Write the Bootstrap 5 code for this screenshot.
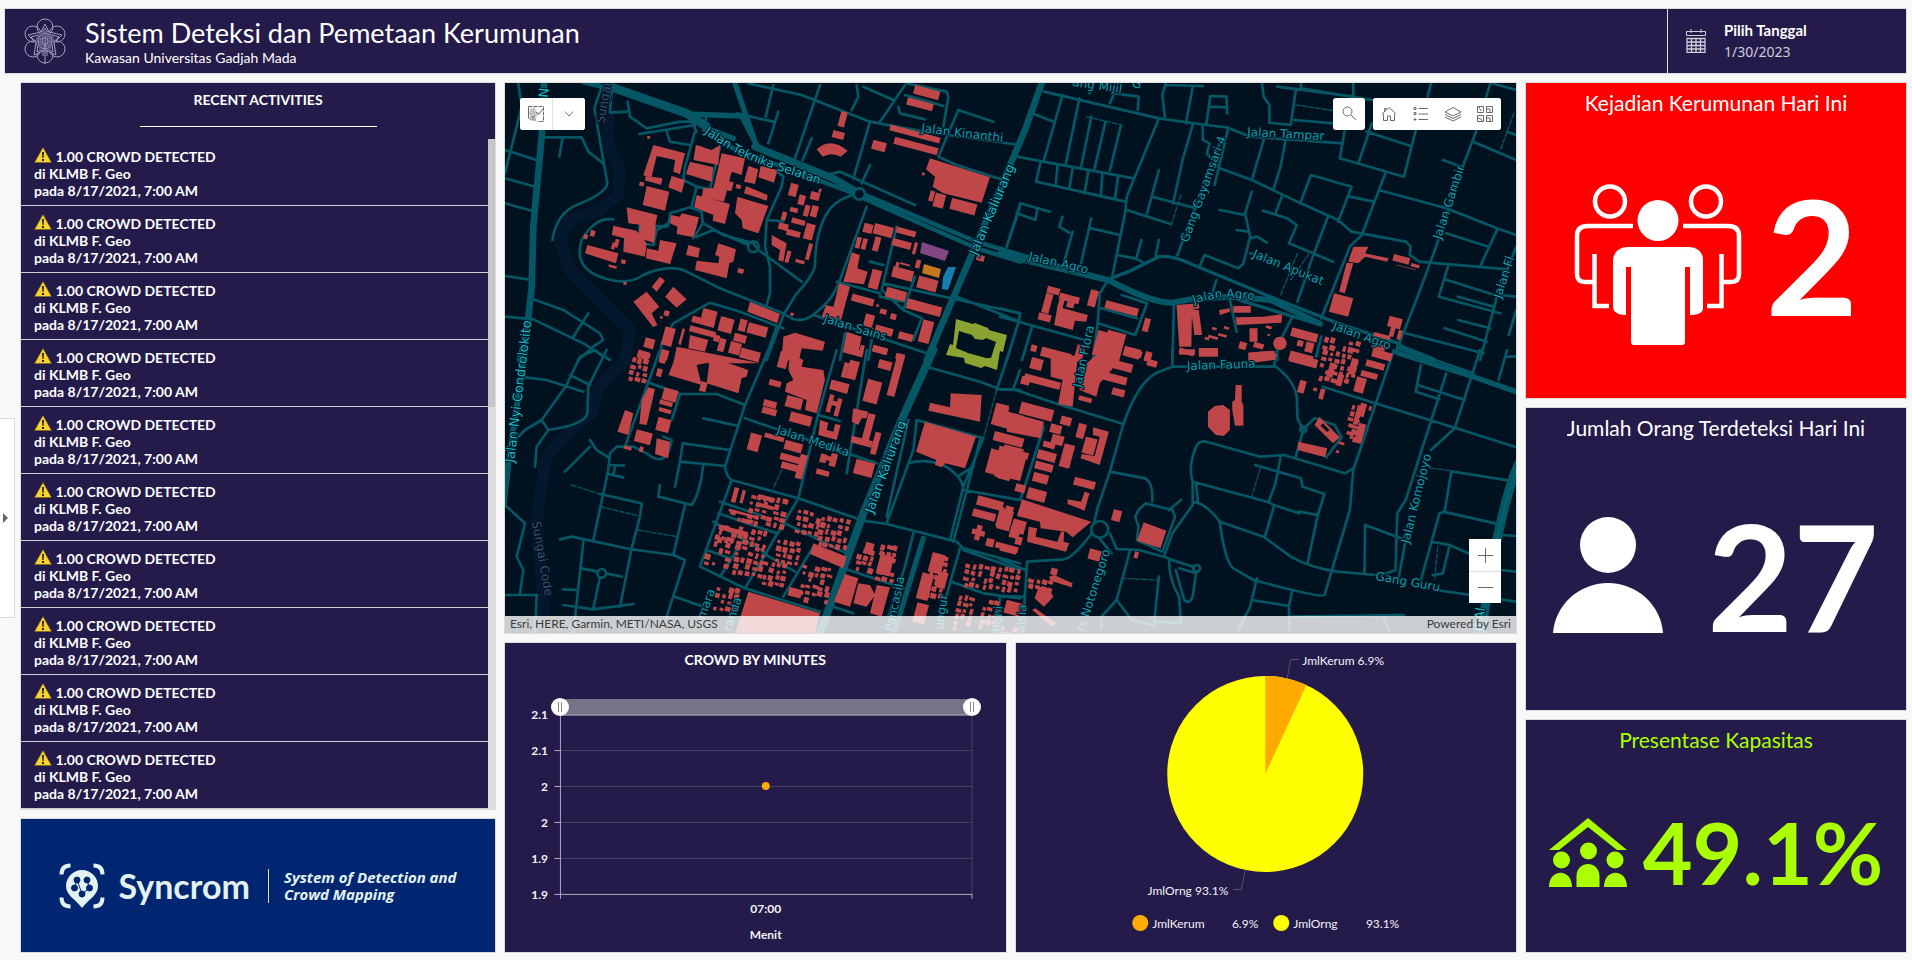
<!DOCTYPE html>
<html lang="id">
<head>
<meta charset="utf-8">
<meta name="viewport" content="width=device-width, initial-scale=1">
<title>Sistem Deteksi dan Pemetaan Kerumunan</title>
<link href="https://cdn.jsdelivr.net/npm/bootstrap@5.3.0/dist/css/bootstrap.min.css" rel="stylesheet">
<style>
  body { background: #f8f8f8; color: #fff; font-family: Lato, "Open Sans", sans-serif; font-size: 14px; line-height: 17px; }
  .page { padding: 8px 5px 7px 0; gap: 8px; min-height: 100vh; }
  .panel { background: #241b4a; border: 1px solid #dcdcdc; min-width: 0; min-height: 0; }
  .topbar { min-height: 66px; margin-left: 4px; }
  .topbar h1 { font-size: 27px; line-height: 32px; font-weight: 400; }
  .date-box { width: 239px; border-left: 1px solid #dcdcdc; background: none; color: #fff; padding: 0 18px; gap: 18px; }
  .date-label { font-size: 15px; font-weight: 700; }
  .date-value { font-family: "Noto Sans", sans-serif; color: #cfcdda; }
  .drawer-tab { width: 15px; height: 200px; background: #fff; border: 1px solid #dcdcdc; border-left: 0; padding: 0; margin-right: 5px; }
  .board { display: grid; grid-template-columns: 476fr 1013fr 382fr; gap: 8px; min-width: 0; }
  .column { display: grid; gap: 8px; min-width: 0; min-height: 0; }
  .column-left { grid-template-rows: 728fr 135fr; }
  .column-mid { grid-template-rows: 552fr 311fr; }
  .column-right { grid-template-rows: 317fr 304fr 234fr; }
  .charts { display: grid; grid-template-columns: 1fr 1fr; gap: 8px; min-height: 0; }
  .panel-title { font-size: 14px; line-height: 17px; font-weight: 700; text-align: center; }
  .title-rule { width: 50%; height: 1px; background: #fff; margin: 2px 0 4px; }
  .activity { padding: 9px 13px 6px; border-bottom: 1px solid #cfcfcf; font-weight: 700; line-height: 17px; }
  .activity svg { margin-top: -6px; }
  .scroll-track { width: 7px; background: #dedede; }
  .scroll-thumb { height: 40%; background: #c6c6c6; }
  .brand-panel { background: #002672; color: #e2f2f0; }
  .brand-name { font-size: 34px; line-height: 40px; font-weight: 700; margin: 0 18px 0 13px; }
  .brand-tag { font: italic 700 15px/17px "Open Sans", sans-serif; border-left: 1px solid #cfe0e6; padding-left: 15px; }
  .map { background: #00111f; overflow: hidden; }
  .map-canvas { position: absolute; inset: 0; width: 100%; height: 100%; }
  .map text { font-family: "DejaVu Sans", sans-serif; font-size: 12px; fill: #0a9fad; stroke: #00111f; stroke-width: 2px; paint-order: stroke; }
  .map .street-major { fill: #10bcc8; font-size: 13px; }
  .map .street-curved { fill: #10bcc8; }
  .map .river-name { fill: #36506f; }
  .map-tools { top: 15px; left: 15px; right: 15px; }
  .tool-set { background: #fff; border-radius: 3px; overflow: hidden; }
  .tool { width: 32px; height: 32px; border: 0; padding: 0; background: #fff; display: grid; place-items: center; }
  .tool.border-start { width: 33px; }
  .zoom-set { right: 15px; bottom: 30px; }
  .zoom-set .tool + .tool { border-top: 1px solid #ddd; }
  .credits { background: rgba(255,255,255,.8); color: #3c3c3c; height: 17px; font-size: 12px; line-height: 16px; padding: 0 5px; }
  .chart text { font-family: Lato, sans-serif; font-size: 12px; font-weight: 700; fill: #f2f1f6; }
  .chart .pie-text { font-weight: 400; }
  .range-pair { position: absolute; left: 46px; right: 25px; top: 55px; height: 18px; }
  .range-pair input { position: absolute; inset: 0; width: 100%; height: 18px; margin: 0; appearance: none; background: none; pointer-events: none; }
  .range-pair input::-webkit-slider-thumb { appearance: none; pointer-events: auto; width: 18px; height: 18px; border-radius: 50%; border: 0;
    background: linear-gradient(90deg, #888 1px, transparent 1px 3px, #888 3px 4px) center / 4px 10px no-repeat #fff; }
  .figure-title { font-size: 21px; line-height: 24px; padding-top: 8px; font-weight: 400; margin: 0; }
  .figure { font-weight: 700; line-height: 1; }
  .figure-xl { font-size: 160px; margin-bottom: 6px; } .figure-lg { font-size: 148px; } .figure-md { font-size: 86px; }
  .figure-row-lg { gap: 44px; }
  .alert-panel { background: #f00; }
  .lime { color: #aaff00; }
</style>
</head>
<body>
<div class="page d-flex flex-column">
  <header class="topbar panel d-flex">
    <div class="d-flex align-items-center flex-fill ps-3">
      <svg width="48" height="52" viewBox="-24 -26 48 52" fill="none" stroke="#a29ebd" stroke-width="1" class="me-3">
        <g><circle cy="-14" r="8"/><circle cx="12" cy="-7" r="8"/><circle cx="12" cy="8" r="8"/><circle cy="14" r="8"/><circle cx="-12" cy="8" r="8"/><circle cx="-12" cy="-7" r="8"/></g>
        <path fill="#241b4a" d="M0-17 4-9 17-6 9 2 11 14 0 9-11 14-9 2-17-6-4-9Z"/>
        <path d="M0-13 4-7 14-4 7 2 8 11 0 7-8 11-7 2-14-4-4-7Z"/>
        <ellipse rx="9" ry="10" fill="#4a4370" stroke-dasharray="1 1"/><ellipse rx="7" ry="8"/><ellipse rx="5" ry="6" stroke-dasharray="2 1"/><ellipse rx="3" ry="4"/><path d="M0-3V17M-2 9V15M2 9V15M0 17V23"/>
      </svg>
      <div>
        <h1 class="m-0">Sistem Deteksi dan Pemetaan Kerumunan</h1>
        <div>Kawasan Universitas Gadjah Mada</div>
      </div>
    </div>
    <button type="button" class="date-box border-top-0 border-end-0 border-bottom-0 d-flex align-items-center text-start">
      <svg width="20" height="24" viewBox="0 0 20 24" fill="none" stroke="#cfcdda"><path d="M.5 2.500h19v4H.5zM5 0v4M15 0v4"/><path stroke-width="1.300" d="M1 9.500h18v14H1zM1 13h18M1 16.500h18M1 20h18M5.500 9.500v14M10 9.500v14M14.500 9.500v14"/></svg>
      <span><span class="d-block date-label mb-1">Pilih Tanggal</span><span class="d-block date-value">1/30/2023</span></span>
    </button>
  </header>

  <main class="d-flex flex-fill">
    <button type="button" class="drawer-tab flex-shrink-0 align-self-center d-flex align-items-center" aria-label="Buka panel"><svg width="9" height="10" viewBox="0 0 9 10"><path d="M3 0 8 5 3 10Z" fill="#666"/></svg></button>
    <div class="board flex-fill">

      <div class="column column-left">
        <section class="panel d-flex flex-column">
          <div class="pt-2 d-flex flex-column align-items-center pb-2">
            <h2 class="panel-title m-0 mb-3">RECENT ACTIVITIES</h2>
            <div class="title-rule"></div>
          </div>
          <div class="d-flex flex-fill">
            <ul class="list-unstyled m-0 flex-fill" id="activities"></ul>
            <div class="scroll-track"><div class="scroll-thumb"></div></div>
          </div>
        </section>
        <section class="panel brand-panel d-flex align-items-center justify-content-center">
          <svg width="46" height="46" viewBox="0 0 46 46">
            <g fill="none" stroke="#e2f2f0" stroke-width="4"><path d="M2.500 11.500Q2.500 2.500 11.500 2.500M34.500 2.500Q43.500 2.500 43.500 11.500M43.500 34.500Q43.500 43.500 34.500 43.500M11.500 43.500Q2.500 43.500 2.500 34.500"/></g>
            <path fill="#e2f2f0" d="M23 7a16 16 0 0 1 16 16c0 9-8 12-16 22C15 35 7 32 7 23A16 16 0 0 1 23 7Z"/>
            <g fill="#002672" stroke="#002672"><circle cx="18" cy="17" r="3"/><circle cx="28" cy="17" r="3"/><circle cx="15.500" cy="25" r="3"/><circle cx="30.500" cy="25" r="3"/><circle cx="23" cy="31" r="3"/><path fill="none" d="M18 17 23 31M15.500 25 18 17M28 17 30.500 25 23 31"/></g>
          </svg>
          <span class="brand-name">Syncrom</span>
          <span class="brand-tag">System of Detection and<br>Crowd Mapping</span>
        </section>
      </div>

      <div class="column column-mid">
        <section class="panel map position-relative">
          <svg class="map-canvas" viewBox="505 83 1011 550" preserveAspectRatio="xMidYMid slice" fill="none" stroke-linecap="round" stroke-linejoin="round">
            <path stroke="#03182c" stroke-width="12" d="M611 83 607 140 620 170 618 195 600 210 570 220 560 240 570 270 600 300 630 330 625 360 600 385 590 415 560 440 545 460 537 520 545 633"/>
            <g stroke="#055766">
              <g transform="translate(500 80) scale(.333333)" stroke-width="8">
                <path stroke-width="26" d="M250 0 330 20 560 100 620 140"/>
                <path stroke-width="16" d="M560 102 725 108 770 195M620 145 700 175 M705 10 770 200"/>
                <path stroke-width="22" d="M765 200 1000 295 1060 330"/>
                <path stroke-width="13" d="M1060 330 1430 485 1560 525M1090 355 1430 505 1560 545M615 150 700 205 980 310 1060 340"/>
                <path stroke-width="20" d="M1625 10 1575 150 1400 560 1280 840M132 10 125 170 100 440 95 620 80 760 60 840"/>
                <path d="M55 10 65 80 15 280M15 210 110 240M15 295 105 320M15 370 95 392M130 172H245L265 215 310 250M188 172 178 230M305 20 283 85 310 240 322 310Q318 340 230 375 170 400 157 480M335 30 330 98 380 95M383 65 390 110 440 145 540 125H575L590 155M418 162 585 135M500 155 510 185 570 195M620 110 610 150M585 155 555 260 550 300 590 320 575 380M590 320 630 328 660 200"/>
                <path d="M340 418Q285 410 245 480 220 560 300 590 380 620 430 585 510 550 560 575L660 625 850 700Q900 740 945 700 1000 660 1020 600L1100 380M505 435 510 400 570 382 605 395 608 430 580 475M505 430 470 450 460 495 420 490 418 435 500 440M610 430 670 465 760 490 775 510 905 605M590 470 640 450 745 495M830 275 850 290 845 320 800 420 795 500 810 560V640L800 675M1060 345Q1000 360 975 410 945 470 945 560 930 600 890 640L850 705 800 840M800 420 850 424"/>
                <circle cx="760" cy="500" r="16"/><circle cx="1078" cy="342" r="17" fill="#00111f"/>
                <path d="M15 588 95 600M15 710 100 718 250 790 330 840M100 658 190 690 300 760 310 780 280 800 235 840M265 700 220 770M480 840 485 790 520 730 630 668 720 695 850 745M830 740 795 840M745 10 905 45 1110 125 1270 155 1560 195M820 15 797 110M960 15 885 235M835 95 805 190M710 100 820 125M1110 125 1060 295M1140 125 1215 15M1070 15 1075 50 1055 90M1090 20 1180 60M935 175 908 240"/>
                <path d="M1220 10 1340 35 1345 50 1330 140M1215 45 1330 78M1375 90 1480 125M1375 90 1315 230 1370 255 1500 297M1195 80 1200 100 1275 118M980 285 1020 275 1245 375M1110 255 1085 310M1190 440 1145 630 1210 690 1265 715 1240 780M1010 605 1140 640V650L1210 665M1150 610 1560 700M1110 545 1150 555M1370 650 1560 725M940 705 1100 760 1280 820M1020 840 1035 760M1105 840 1115 780M1560 380 1520 500M1210 690 1245 590"/>
              </g>
              <g transform="translate(1000 80) scale(.338066 .333333)" stroke-width="8">
                <path stroke-width="18" d="M0 522 90 545 320 600Q450 670 510 668L580 655 690 650 800 660 945 730M1180 800 1280 840"/>
                <path stroke-width="10" d="M0 505 90 532 320 598 380 575 470 530Q510 525 560 550L800 650 1000 730 1180 790M690 655 950 735"/>
                <path d="M130 35 470 115 610 135 670 142 740 170 1015 190M185 45 130 240M235 55 195 250M270 110 240 260M312 125 280 265M358 135 325 272M95 100 158 125M50 230 395 295M120 245 107 305 370 365M170 260 165 315M215 265 205 325M262 270 250 340M303 280 298 350M350 285 340 355M470 115 375 350 370 400 330 600M340 40 410 50 408 90M265 40 275 15M325 70 340 35M490 10 480 45 488 110M570 20 550 130M490 15 600 18M610 135 622 48 670 50 672 100M620 80 670 82"/>
                <path d="M570 135 540 240 512 370M600 140V180L620 190 612 220 650 265 745 300 890 370 1000 420 1040 455 1200 485 1215 500 1212 525 1240 545 1500 568M675 145 635 315M780 180 745 300M845 180 830 260 810 325M375 390 505 432M470 270 435 400M450 350 580 385M20 500 60 370 148 395M50 400 105 420 110 390M345 525 400 535 425 548M405 530 418 480M460 528 470 480M270 415 240 550M270 445 355 465M215 455 190 545M185 410 175 440 205 458M525 525 650 190M590 560 605 525 705 565 720 550 740 470 725 400 745 335M650 390 725 405M700 450 735 455M740 475 760 470 790 488M740 520 770 530"/>
                <path d="M778 392 850 415 878 435 855 490 985 545M888 370 920 285 1040 320 1000 425M1035 350 1105 365M835 345 815 400M970 410 925 530 880 665M775 10 780 50 797 75V128L860 135 875 30M870 120 990 130M820 20 1045 50V10M1020 150 1005 235 1195 290 1230 150M1060 250 1100 130M1085 155 1215 198M1140 280 1070 465 1035 500 950 715M1120 330 1320 385 1470 445 1527 465M1450 10 1410 150 1365 270M1400 185 1527 240M1310 240 1365 260M1275 10 1265 50M1500 155 1527 165M1365 270 1290 500 1235 650 1170 820M890 10V25L1100 60"/>
                <path d="M1320 460 1445 500M1470 450 1420 560M1325 560 1298 650 1480 700M1315 598 1480 650M1355 650 1460 680M1355 720 1450 745M1315 745 1440 785M1200 760 1430 820M1527 500 1470 650 1420 840M1527 690 1505 765M1527 650 1480 645M1455 10 1527 30M515 668 510 840M640 600 630 635M680 660 700 755M865 710 830 780M820 810V840M320 600 295 640 290 720 275 840M360 645 435 670 400 765 290 730M300 685 405 715M0 685 60 700 55 725 20 840M0 710 250 780M95 740 65 840M950 770 935 830"/>
                <path stroke-width="4" stroke-dasharray="14 6" d="M255 110 360 135M880 520 830 645M875 75 1040 100M1520 100 1480 210M535 345 505 440M860 600 915 520"/>
              </g>
              <g transform="translate(1000 350) scale(.338066 .333333)" stroke-width="8">
                <path stroke-width="16" d="M1180 10 1400 80 1527 125"/><path stroke-width="28" d="M1540 330Q1480 450 1425 840"/><path stroke="#086a76" stroke-width="3" d="M1540 330Q1480 450 1425 840"/>
                <path d="M0 118H40L180 165 365 222M510 50 470 65Q410 90 365 222L325 365 290 470 275 530M510 0V50H810L820 0M810 45Q870 90 878 140L880 205 897 240 875 320M897 238 930 205 990 225 1010 262 965 322M1165 0 1110 165 1045 360 1035 480 960 735Q950 745 750 690L690 655Q670 640 655 550L650 515Q610 460 570 455M570 395V465L510 550 485 620 410 600 345 597 325 550M570 395Q555 350 580 290 590 270 610 275L770 320 840 315 1020 370 1045 355M570 395 790 455 810 465 885 490M885 485 940 495M580 400 585 455M810 470 785 555"/>
                <path d="M755 345 890 385 895 410 960 432 940 495 910 640M830 320 815 400 795 455M650 515 780 560 860 620Q920 655 1000 665L1110 675M1290 720 1527 755M955 110 1110 160 1350 235 1527 292M1420 0 1345 235 1275 300M1200 0 1400 70M1320 70 1200 450 1175 490 1170 660 1130 675M1245 45 1230 125 1300 148M1235 105 1375 150M1200 570 1180 680M1080 525 1200 570M1080 525 1078 670M1500 0 1475 90M1500 20H1527M1340 365 1527 395M1335 365 1315 485 1300 490 1245 690M1310 485 1465 520M1275 575 1330 585 1310 670 1280 675M1330 585 1390 612M1485 555 1527 558M1480 660 1527 665"/>
                <path d="M325 365 430 385Q455 400 450 455M410 480 430 460 510 480 518 500 480 605 405 570 410 530 400 500ZM500 480 535 450M290 560 330 610M275 545Q220 620 190 628L80 635 70 800M0 628 75 660M0 738 70 740M385 600 345 750 300 800V830M345 750 390 810 450 825M470 680 455 825M485 620 510 630 570 650M500 630Q500 690 530 740L535 820 460 815M520 660 545 750Q560 765 570 740L580 670 530 655M760 685 740 770 705 840M745 750 855 768 865 720M855 768V840M855 800 1195 795M1135 800 1150 840M130 230 60 450"/>
                <circle cx="295" cy="538" r="25" fill="#00111f"/><circle cx="582" cy="655" r="10"/><circle cx="897" cy="238" r="9"/>
                <path stroke-width="4" stroke-dasharray="14 6" d="M770 355 745 440M360 685 465 690M1275 355 1335 362M1295 590 1285 690"/>
              </g>
              <g transform="translate(500 350) scale(.333333)" stroke-width="8">
                <path stroke-width="24" d="M1300 0 1200 220 1090 490 960 850"/><path stroke-width="18" d="M75 0 25 340 12 460"/><path stroke-width="16" d="M1270 565 1185 840"/>
                <path d="M75 82 140 90 250 125M310 20 285 0 240 20 200 105 125 210 75 240 15 300M320 0 265 110 262 190Q255 225 145 240L110 290 105 350M125 210 145 240M210 75 270 105M270 270 290 300 325 322M270 290 195 365M15 465 75 520 50 620 70 660 60 730M15 735H110L105 850M375 290 480 0M440 95 540 132H650L735 165M540 132 515 210M400 290H350L330 310 325 360 280 570M325 345 372 347M325 372 370 382M345 350 340 375M400 290 440 310Q500 360 515 270L490 260M550 280 690 300M548 280 540 335 525 410M540 335 675 348M610 345Q600 430 575 465L475 440 480 405M610 205 715 228"/>
                <path d="M805 0 735 165 675 350Q680 380 695 390L600 650 735 715 960 785M695 390 895 445 1090 512 1160 522 1370 575 1390 595 1560 640M735 205 1130 340M1010 0 955 190 895 445 735 715M955 195 1020 213M1100 0 1040 370M855 520 1040 610M660 455 780 495M655 490 830 550M640 515 800 610M730 570 660 680M620 600 690 625M790 610 885 665M940 590 850 740M1030 655 1210 715M1000 770 1060 790"/>
                <path d="M300 432 425 460 420 500 395 595 360 770M180 568 215 560 390 597 520 615 555 630 500 800M555 465 520 615M250 575 220 850M245 655 365 680M300 680 280 775M190 765 280 778 400 762M525 740 610 770M190 718 230 720M1280 50 1440 95 1500 118 1560 120M1530 0 1490 120M1560 60 1540 115M1250 210 1240 300 1160 520M1250 210 1450 265 1390 410 1350 570M1225 210 1160 500M1440 270 1360 575M1225 340Q1270 325 1330 345 1390 380 1390 420L1560 450M1380 375 1420 350M1240 550 1215 650 1165 800M1380 595 1330 770M1355 695 1450 730 1560 745M1390 600 1560 660M1500 740 1490 840"/>
                <circle cx="305" cy="670" r="13" fill="#00111f"/>
                <path stroke-width="4" stroke-dasharray="14 6" d="M215 405 300 432M300 470 415 497M415 540 530 560M845 360 820 415M1490 120 1450 265"/>
              </g>
            </g>
            <g fill="#bf4649" id="buildings">
              <path transform="translate(500 80) scale(.333333)" d="M460 195 555 220 540 283 520 275 525 240 470 228 455 290 487 295 482 315 430 285ZM588 195 635 210 660 195 655 255 580 240ZM570 245 640 262 635 305 558 282ZM665 220 735 235 725 285 695 275 672 365 605 350 610 325 640 325ZM745 258 775 268 765 312 732 305ZM782 258 832 270 822 308 775 292ZM515 288 555 300 545 338 505 322ZM440 318 508 335 495 392 428 375ZM738 318 803 345 800 362 732 340ZM590 345 690 372 675 432 638 422 640 405 582 382ZM712 350 805 378 775 460 728 445 725 420 705 400ZM380 382 472 405 465 440 385 430ZM512 405 540 410 545 400 597 412 590 440 580 472 530 462 532 440 510 430ZM420 430 468 440 462 488 415 475ZM340 437 410 452 440 490 435 530 370 515 372 475 335 465ZM262 495 355 520 348 550 255 520ZM480 480 530 490 510 552 438 535 440 505 475 512ZM565 495 600 505 595 533 558 525ZM655 490 708 508 700 545 688 550 680 595 585 570 590 542 655 550 658 530 645 525ZM400 665 440 635 478 680 455 700 472 735 460 742ZM520 620 560 658 530 683 495 650ZM480 590 495 602 470 635 455 620ZM815 465 860 490 850 545 835 540 840 510 815 495ZM950 208Q990 170 1043 212L1022 230Q995 215 968 230ZM1290 235 1470 292 1445 368 1330 340 1298 320 1305 290 1278 268ZM1055 517 1080 525 1072 565 1103 575 1092 613 1030 605ZM1018 610 1050 620 1022 725 965 710 978 675 1000 680ZM750 665 840 702 832 730 742 695ZM570 765 625 780 615 815 565 805ZM530 800 780 850H520ZM850 770 885 758 975 785 968 812 905 805 895 850 845 835ZM1040 755 1085 770 1075 820 1030 810Z"/>
              <path transform="translate(1000 80) scale(.338066 .333333)" d="M170 680 260 705 255 725 222 722 215 750 160 735ZM522 675 588 670 590 685 568 690 566 800 530 800ZM565 690H588L598 765H575ZM648 690 680 685V695L650 705ZM690 678H742V698H690ZM697 712 780 710 834 703 833 728 700 735ZM738 745H762V785H738ZM530 808H577V824H530ZM588 804H645V830H588ZM735 818 812 812 815 840H735ZM1045 500H1090L1080 520 1150 535 1145 545 1080 530 1060 550 1030 545ZM1025 548 1045 550 1020 640 1003 635ZM988 640 1045 655 1030 710 973 695ZM828 770A20 20 0 1 0 828.100 770Z"/>
              <path transform="translate(1000 350) scale(.338066 .333333)" d="M150 0 230 20 225 70 215 170 172 162 185 90 150 80ZM300 0 355 20 330 60 295 100 285 140 235 120 245 50ZM20 185 130 215 120 265 20 245ZM275 232 322 245 295 345 238 325 242 312 280 318 295 260 275 255ZM200 448 240 455 250 425 265 430 250 482 200 462ZM65 448 270 515 215 562 195 545 120 535 118 515 50 498ZM85 530 110 535 105 560 170 575 180 545 190 545 188 575 205 580 195 605 80 575ZM425 517 492 542 475 595 405 572ZM697 105H715V155L720 165V227H695L687 180V155L695 150ZM635 168 660 165 680 180V240L662 258 638 255 615 230V185ZM735 8 800 2 820 15 810 30 735 40ZM945 200 1005 262 985 280 930 225ZM882 275 968 295 962 322 880 300ZM145 680 160 675 215 700 212 712 150 692ZM115 710 145 715 158 740 130 770 102 745ZM95 780 105 775 165 820 155 830Z"/>
              <path transform="translate(500 350) scale(.333333)" d="M535 0 620 15 615 40 590 45 605 105 505 75ZM630 20 745 60 740 80 725 85 715 130 620 100ZM445 112 465 118 440 225 418 222 425 150ZM375 180 400 190 385 255 352 245ZM470 265 510 275 505 325 465 312ZM870 10 910 30 905 50 970 60 975 90 950 190 915 180 920 150 855 125 860 100 880 90 865 60ZM960 210 985 218 980 240 1000 245 1005 222 1022 225 1010 270 955 255ZM1060 175 1105 185 1100 205 1085 205 1075 225 1055 215ZM1290 158 1350 172 1352 130 1445 135 1440 215 1285 182ZM1275 215 1428 260 1395 355 1335 340 1325 352 1305 345 1308 330 1248 305ZM940 580 1040 620 1030 655 930 612ZM1035 672 1075 685 1050 770 1002 755ZM1130 705 1170 712 1145 800 1110 790ZM745 725 960 790 945 850H705ZM1075 700 1110 705 1125 735 1100 770 1060 760Z"/>
            </g>
            <path fill="#00111f" transform="translate(1000 350) scale(.338066 .333333)" d="M955 220 975 240 968 246 948 227Z"/>
            <path fill="#804781" d="M922 242 949 251 945 261 920 253Z"/><path fill="#c8761f" d="M924 264 941 269 939 278 922 273Z"/><path fill="#1480b0" d="M948 267 956 267 948 290 942 289 943 277Z"/>
            <path fill="#8aa332" fill-rule="evenodd" d="M956 319 973 324 975 323 988 328 989 330 1007 335 1003 352 1000 351 997 370 985 366 981 368 965 363 964 358 946 355 950 344 953 345ZM959 331 972 335 975 339 983 340 986 338 996 342 991 358 986 358 968 353 956 348Z"/>
            <path id="name-teknika" d="M704 133Q735 155 760 164T850 194"/>
            <path id="name-agro" d="M1194 304Q1232 290 1275 307"/>
            <g id="names">
              <text class="street-curved"><textPath href="#name-teknika">Jalan Teknika Selatan</textPath></text>
              <text><textPath href="#name-agro">Jalan Agro</textPath></text>
            </g>
          </svg>

          <div class="map-tools position-absolute d-flex">
            <div class="tool-set d-flex me-auto">
              <button type="button" class="tool" aria-label="Pilih"><svg width="16" height="16" viewBox="0 0 16 16" fill="none" stroke="#6a6a6a"><path fill="#c4c4c4" stroke="none" d="M2 3 7 1 8 6 11 8 7 12 3 11 1 8Z"/><path d="M.5.5h15v15h-6" stroke-dasharray="4 1"/><path d="M.5.5v12M8 6l3 2 4-5M7 10l-3 2"/><circle cx="3.500" cy="12.500" r="1.500"/><circle cx="6.500" cy="13.500" r="1"/></svg></button>
              <button type="button" class="tool border-start" aria-label="Opsi"><svg width="10" height="6" fill="none" stroke="#777"><path d="M1 .5 5 5 9 .5"/></svg></button>
            </div>
            <button type="button" class="tool tool-set me-2" aria-label="Cari"><svg width="16" height="16" fill="none" stroke="#6a6a6a"><circle cx="6.500" cy="5.500" r="4.500"/><path d="M10 9 15 14"/></svg></button>
            <div class="tool-set d-flex">
              <button type="button" class="tool" aria-label="Beranda"><svg width="16" height="16" fill="none" stroke="#6a6a6a"><path d="M1 8 8 1.500 15 8M3.500 6V2.500h2V4M2.500 8v6.500h4V10h3v4.500h4V8"/></svg></button>
              <button type="button" class="tool" aria-label="Legenda"><svg width="16" height="16" fill="none" stroke="#6a6a6a"><path d="M5.500 2.500H15M5.500 8H15M5.500 13.500H15M1 1.500h2v2H1zM1 6.500h2v2H1zM2 12v3M.5 13.500h3"/></svg></button>
              <button type="button" class="tool" aria-label="Lapisan"><svg width="18" height="16" fill="none" stroke="#6a6a6a"><path d="M9 1.500 17 6 9 10 1 6ZM1 8.500 9 12.500 17 8.500M1 11 9 15 17 11"/></svg></button>
              <button type="button" class="tool" aria-label="Peta dasar"><svg width="18" height="18" fill="none" stroke="#6a6a6a"><path d="M1.500 1.500h6v6h-6zM10.500 1.500h6v6h-6zM1.500 10.500h6v6h-6zM10.500 10.500h6v6h-6zM3 2l2 4M11 4h3v3M2 13l3 1 1 2M11 13h3v3"/></svg></button>
            </div>
          </div>
          <div class="zoom-set position-absolute">
            <button type="button" class="tool" aria-label="Perbesar"><svg width="15" height="15" stroke="#6a6a6a"><path d="M7.500 0v15M0 7.500h15"/></svg></button>
            <button type="button" class="tool" aria-label="Perkecil"><svg width="15" height="15" stroke="#6a6a6a"><path d="M0 7.500h15"/></svg></button>
          </div>
          <div class="credits position-absolute start-0 end-0 bottom-0 d-flex justify-content-between"><span>Esri, HERE, Garmin, METI/NASA, USGS</span><span>Powered by Esri</span></div>
        </section>

        <div class="charts">
          <section class="panel position-relative">
            <svg class="chart position-absolute top-0 start-0 w-100 h-100" viewBox="0 0 501 309" role="img" aria-label="Crowd by minutes">
              <path fill="#787288" d="M56 56h411v17H56z"/>
              <path stroke="#474065" d="M56 107.500h412M56 143.500h412M56 179.500h412M56 215.500h412M467.500 73v179" /><path stroke="#9691a8" d="M56 71.500h411"/>
              <path stroke="#aeabbd" fill="none" d="M55.500 73v183M49.500 107.500h6M49.500 143.500h6M49.500 179.500h6M49.500 215.500h6M49.500 251.500h418.500M467.500 252v4"/>
              <circle cx="261" cy="143" r="4" fill="#ffaa00"/>
              <g text-anchor="end"><text x="43" y="76">2.1</text><text x="43" y="112">2.1</text><text x="43" y="148">2</text><text x="43" y="184">2</text><text x="43" y="220">1.9</text><text x="43" y="256">1.9</text></g>
              <g text-anchor="middle"><text x="261" y="270">07:00</text><text x="261" y="296">Menit</text></g>
            </svg>
            <h2 class="panel-title position-relative m-0 pt-2">CROWD BY MINUTES</h2>
            <div class="range-pair"><input type="range" value="0" aria-label="Waktu awal"><input type="range" value="100" aria-label="Waktu akhir"></div>
          </section>
          <section class="panel position-relative">
            <svg class="chart position-absolute top-0 start-0 w-100 h-100" viewBox="0 0 500 309" role="img" aria-label="JmlKerum 6.9%, JmlOrng 93.1%">
              <circle cx="249" cy="131" r="98" fill="#ffff00"/><path fill="#ffaa00" d="M249 131V33A98 98 0 0 1 290.200 42.100Z"/>
              <path stroke="#54506a" fill="none" d="M271 35 274.500 16.500H283M229 227 225 246.500H217"/>
              <circle cx="124" cy="280" r="8" fill="#ffaa00"/><circle cx="265" cy="280" r="8" fill="#ffff00"/>
              <text class="pie-text" x="286" y="22">JmlKerum 6.9%</text><text class="pie-text" x="212" y="252" text-anchor="end">JmlOrng 93.1%</text>
              <text class="pie-text" x="136" y="285">JmlKerum</text><text class="pie-text" x="242" y="285" text-anchor="end">6.9%</text>
              <text class="pie-text" x="277" y="285">JmlOrng</text><text class="pie-text" x="383" y="285" text-anchor="end">93.1%</text>
            </svg>
          </section>
        </div>
      </div>

      <div class="column column-right">
        <section class="panel alert-panel d-flex flex-column text-center">
          <h2 class="figure-title">Kejadian Kerumunan Hari Ini</h2>
          <div class="flex-fill d-flex align-items-center justify-content-center gap-4">
            <svg class="mt-3" width="168" height="161" viewBox="0 0 168 161" fill="none" stroke="#fff" stroke-width="4.500">
              <circle cx="36" cy="17.500" r="15"/><circle cx="132" cy="17.500" r="15"/>
              <path d="M59 42H14Q3 42 3 52V90Q3 98 11 98H20M20.500 70V122H35M109 42H154Q165 42 165 52V90Q165 98 157 98H148M147.500 70V122H133"/>
              <g fill="#fff" stroke="none"><circle cx="84" cy="36.500" r="20.500"/><path d="M53 63H115Q129 64 129 76V124Q129 131 116 131V83H111V158Q111 161 108 161H60Q57 161 57 158V83H52V131Q39 131 39 122V76Q40 64 53 63Z"/></g>
            </svg>
            <span class="figure figure-xl">2</span>
          </div>
        </section>
        <section class="panel d-flex flex-column text-center">
          <h2 class="figure-title">Jumlah Orang Terdeteksi Hari Ini</h2>
          <div class="flex-fill d-flex align-items-center justify-content-center figure-row-lg">
            <svg width="110" height="116" viewBox="0 0 110 116" fill="#fff"><ellipse cx="55" cy="28" rx="28" ry="28"/><path d="M0 116C2 88 26 66 55 66S108 88 110 116Z"/></svg>
            <span class="figure figure-lg">27</span>
          </div>
        </section>
        <section class="panel lime d-flex flex-column text-center">
          <h2 class="figure-title">Presentase Kapasitas</h2>
          <div class="flex-fill d-flex align-items-center justify-content-center gap-3">
            <svg width="78" height="69" viewBox="0 0 78 69" fill="currentColor"><path d="M39 0 78 32H68L39 9 10 32H0Z"/><circle cx="39.500" cy="33" r="8.500"/><circle cx="12.500" cy="42" r="8.500"/><circle cx="66" cy="42" r="8.500"/><path d="M0 69C0 50 23 50 23 69ZM55 69C55 50 78 50 78 69ZM27.500 69V58C28 42 50 42 50.500 58V69Z"/></svg>
            <span class="figure figure-md">49.1%</span>
          </div>
        </section>
      </div>
    </div>
  </main>
</div>

<script src="https://cdn.jsdelivr.net/npm/bootstrap@5.3.0/dist/js/bootstrap.bundle.min.js"></script>
<script>
  const warning = '<svg width="18" height="16" viewBox="0 0 18 16"><path d="M9 .5 17.500 15.500H.5Z" fill="#fdd22a" stroke="#6b5a18" stroke-width=".5"/><path d="M8 5h2l-.4 6H8.400zM8 12h2v2H8z" fill="#222"/></svg>';
  document.getElementById('activities').innerHTML = Array.from({ length: 10 }, () =>
    `<li class="activity">${warning} 1.00 CROWD DETECTED<br>di KLMB F. Geo<br>pada 8/17/2021, 7:00 AM</li>`).join('');

  const svgNS = 'http://www.w3.org/2000/svg';
  const layer = document.getElementById('buildings');
  const round = n => Math.round(n * 10) / 10;

  // outline of a rotated rectangular footprint
  function footprint(cx, cy, w, h, deg) {
    const a = deg * Math.PI / 180, c = Math.cos(a), s = Math.sin(a);
    return 'M' + [[-1, -1], [1, -1], [1, 1], [-1, 1]].map(([i, j]) => {
      const x = i * w / 2, y = j * h / 2;
      return round(cx + x * c - y * s) + ' ' + round(cy + x * s + y * c);
    }).join('L') + 'Z';
  }
  function addPath(d, transform) {
    const p = document.createElementNS(svgNS, 'path');
    p.setAttribute('d', d); p.setAttribute('transform', transform); layer.append(p);
  }
  const sheets = [
    ['translate(500 80) scale(.333333)', `688,318,20,28 715,320,15,12 278,460,14,18 257,470,12,14 350,490,12,25 340,498,10,20 370,545,14,12 338,560,25,8 722,573,18,14 375,610,10,8 446,172,9,8 425,312,14,12 460,302,50,12 597,204,20,12 500,700,16,16 484,712,8,8 880,330,24,38 905,360,20,30 945,348,28,24 960,332,8,12 882,390,24,14 920,392,16,34 943,394,20,34 852,408,14,26 850,440,30,20 895,425,42,16 880,460,42,18 928,455,28,48 864,530,12,36 900,545,28,10 927,515,12,50 1028,118,20,46 1015,165,36,22 1137,198,42,28 1280,38,78,26 1260,73,80,22 1245,162,155,18 1248,198,135,22 1295,348,14,32 1318,362,32,42 1390,380,78,34 1104,445,28,28 1150,452,58,32 1218,456,60,18 1075,488,14,34 1093,492,14,34 1130,492,18,44 1205,492,58,22 1245,505,10,36 1125,598,30,58 1208,582,64,32 1192,555,10,18 1215,553,30,6 1254,552,14,26 1282,612,60,36 1188,643,62,30 1272,683,106,30 1088,660,68,22 1107,722,28,38 1152,752,54,24 1217,770,44,22 1278,755,34,68 1150,695,20,16 1180,710,18,18 1133,677,8,8 876,703,10,10 1441,534,24,18 1270,282,8,8 628,704,44,30 610,725,70,20 678,735,42,44 608,755,80,18 728,736,22,36 772,750,60,32 720,775,38,24 650,775,18,20 505,770,32,56 545,770,8,50 665,795,20,40 705,805,34,36 448,790,30,30 430,825,36,24 495,825,20,30 1140,810,46,20 1200,830,26,18 1085,810,12,30`],
    ['translate(1000 80) scale(.338066 .333333)', `158,632,38,20 140,670,22,60 132,712,38,22 205,655,60,20 208,675,22,16 182,665,16,44 275,655,24,50 360,685,100,24 433,735,18,40 100,805,18,20 165,825,90,28 235,820,24,50 295,790,28,75 335,800,56,90 390,818,50,30 438,830,20,30 765,797,30,16 718,797,22,22 630,772,30,8 658,766,26,8 634,746,14,8 670,744,16,8 795,742,18,8 795,765,8,6 612,776,14,8 1187,538,50,20 1228,557,26,10 1200,562,60,2 1168,728,40,32 1160,755,14,30 1182,765,12,30 1130,768,50,12 900,765,80,26 888,790,18,18 915,802,24,30 890,835,70,30 1120,800,40,18 1130,825,60,24`],
    ['translate(1000 350) scale(.338066 .333333)', `552,6,46,16 898,32,84,26 108,42,36,34 125,95,110,22 75,92,26,24 348,45,90,26 338,85,76,24 350,127,38,22 252,148,40,14 400,10,40,20 450,40,30,20 437,22,20,20 108,185,100,36 195,213,32,26 240,243,24,44 165,237,34,26 170,270,36,30 145,285,36,18 35,270,70,24 265,288,36,50 138,318,56,28 130,350,54,24 198,318,32,70 40,308,90,20 10,345,36,80 52,355,34,70 120,385,46,28 108,435,56,34 60,415,30,24 250,400,64,24 22,500,24,64 55,530,40,40 345,497,26,34 280,615,36,32 403,615,12,20 25,598,50,20 55,572,20,24 893,110,20,38 932,118,12,10 952,132,14,32 1072,180,18,40 1058,195,14,60 1065,250,22,60 1042,252,10,30 1010,280,18,8 998,305,10,8 1095,175,8,14 980,60,18,44 1005,90,18,36 1045,50,20,50 1065,105,30,46 1092,75,50,18 1110,45,56,20 1130,18,50,18 160,665,20,20 42,775,55,36 0,500,14,60 5,200,30,60`],
    ['translate(500 350) scale(.333333)', `490,20,20,40 478,68,16,24 610,110,20,30 750,15,60,30 510,135,44,36 498,160,40,14 495,182,38,12 490,225,40,40 430,262,50,36 383,294,24,10 424,298,12,16 850,30,28,50 825,100,36,18 810,162,40,20 808,184,44,20 882,158,50,34 902,207,66,30 1058,60,30,56 1035,60,14,46 1018,110,56,30 990,160,14,54 1014,172,14,54 1002,160,30,14 1155,45,40,26 1188,75,24,130 1117,125,44,68 1060,5,60,20 1140,0,40,20 1105,235,22,90 1085,275,64,20 1127,280,18,68 763,277,34,52 823,262,60,14 880,290,54,28 870,325,60,20 868,350,50,20 904,350,22,74 970,325,20,26 1000,330,20,40 985,325,30,14 968,368,40,16 1092,355,58,44 1500,195,40,66 1540,215,50,50 1525,268,90,28 1480,335,32,74 1520,350,38,80 1540,300,60,20 1470,460,80,28 1452,495,70,24 1515,510,40,60 1435,548,16,46 1435,548,40,16 1470,578,24,24 1520,592,70,18 1545,545,30,40 705,435,14,46 728,440,10,40 800,445,50,14 800,470,44,12 700,542,90,14 725,490,80,8 1310,640,40,60 1275,710,36,80 1325,690,30,50 1262,790,36,60 1155,645,42,60 1107,595,26,34 1540,775,50,40 885,728,40,26 1100,740,20,40`]
  ];
  for (const [transform, list] of sheets)
    addPath(list.split(' ').map(b => footprint(...b.split(',').map(Number), 15)).join(''), transform);

  // residential quarters: x, y, width, height of each quarter, filled with small houses
  const quarters = [[395,0,60,90],[750,430,110,95],[670,475,90,40],[655,520,90,50],[750,535,65,55],[640,550,55,50],[615,610,75,45],[705,580,85,100],[890,475,75,70],[960,495,100,85],[830,565,80,80],[790,630,80,80],[905,640,85,120],[645,705,70,70],[1070,590,50,70],[1140,580,60,110],[1395,635,165,80],[1370,730,60,120],[1445,745,50,100],[1290,610,60,130],[1585,680,80,40],[1480,820,100,30],[2470,-40,120,130],[2550,160,40,120]];
  let seed = 7;
  const rand = () => (seed = (seed * 16807) % 2147483647) / 2147483647;
  let d = '';
  for (const [x, y, w, h] of quarters)
    for (let j = 8; j < h; j += 19)
      for (let i = 8; i < w; i += 19)
        if (rand() > .14) d += footprint(x + i + rand() * 5 - j * .15, y + j + rand() * 5 + i * .12, 9 + rand() * 9, 9 + rand() * 9, 18);
  addPath(d, 'translate(500 350) scale(.333333)');

  // street names: x, y, angle, text, style
  const names = [[921,132,7,'Jalan Kinanthi'],[977,256,-67,'Jalan Kaliurang','street-major'],[514,463,-83,'Jalan Nyi Condrolokito','street-major'],[548,98,-85,'N','street-major'],[604,124,-80,'Sungai','river-name'],[532,522,80,'Sungai Code','river-name'],[823,322,17,'Jalan Sains'],[1028,260,13,'Jalan Agro'],[1332,329,20,'Jalan Agro'],[1247,136,3,'Jalan Tampar'],[1252,257,22,'Jalan Apukat'],[1188,243,-70,'Gang Gayamsari 4'],[1441,240,-72,'Jalan Gambir'],[1501,299,-72,'Jalan Fl'],[1072,86,8,'ang Mijil'],[1132,88,0,'G'],[1187,370,-2,'Jalan Fauna'],[1081,388,-78,'Jalan Flora'],[776,433,18,'Jalan Medika'],[873,514,-70,'Jalan Kaliurang','street-major'],[893,632,-78,'Pancasila'],[702,627,-70,'emara'],[731,632,-72,'randa'],[943,630,-82,'ungur'],[1001,632,-87,'honi'],[1025,632,-87,'visia'],[1084,632,-72,'rs Notonegoro'],[1375,580,10,'Gang Guru'],[1409,544,-76,'Jalan Komojoyo'],[1482,632,-82,'Jl Al','street-major']];
  const nameLayer = document.getElementById('names');
  for (const [x, y, angle, label, style] of names) {
    const t = document.createElementNS(svgNS, 'text');
    t.setAttribute('transform', `translate(${x} ${y}) rotate(${angle})`);
    if (style) t.setAttribute('class', style);
    t.textContent = label; nameLayer.append(t);
  }
</script>
</body>
</html>
